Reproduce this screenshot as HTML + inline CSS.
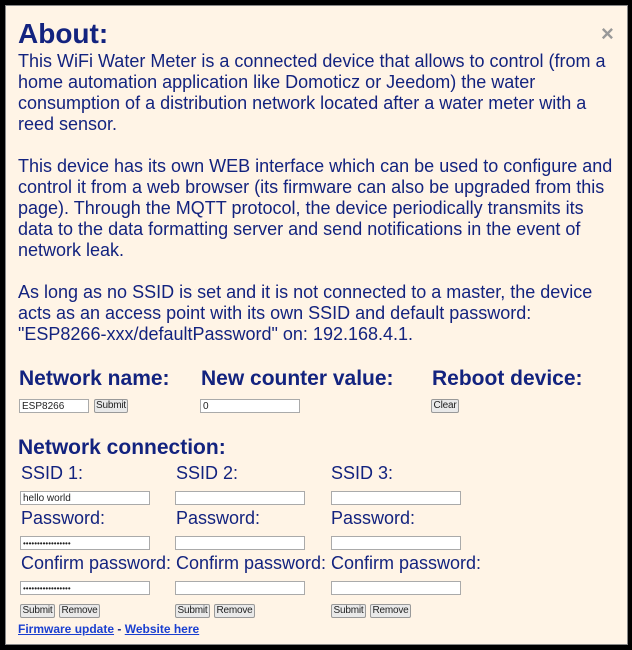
<!DOCTYPE html>
<html><head><meta charset="utf-8"><style>
*{margin:0;padding:0;box-sizing:border-box}
body{width:632px;height:650px;background:#000;position:relative;overflow:hidden;font-family:"Liberation Sans",sans-serif;color:#13237f}
#p{position:absolute;left:5px;top:5px;width:623px;height:640px;background:#fff4e6;border:1px solid #888}
.a{position:absolute;white-space:nowrap}
h1{position:absolute;left:12px;top:12px;font-size:28px;font-weight:bold;line-height:32px}
.x{position:absolute;left:595px;top:15px;font-size:22px;color:#999;font-weight:bold}
.t{position:absolute;left:12px;top:45px;width:600px;font-size:18px;line-height:21px}
.h{font-size:21px;font-weight:bold;line-height:24px}
.l{font-size:18px;line-height:21px}
.in{position:absolute;height:14px;background:#fff;border:1px solid #aaa;font-size:10px;line-height:13px;padding-left:2px;color:#222;font-family:"Liberation Sans",sans-serif;overflow:hidden}
.b{position:absolute;height:14px;background:#e9e9e9;border:1px solid #999;border-radius:2px;font-size:10px;line-height:12px;padding:0;color:#222;text-align:center;letter-spacing:-0.2px;white-space:nowrap}
.lk{position:absolute;font-size:12px;font-weight:bold;color:#1a3fd0;line-height:14px}
.lk u{color:#1a3fd0}
</style></head><body>
<div id="p">
<h1>About:</h1>
<div class="x">×</div>
<div class="t">This WiFi Water Meter is a connected device that allows to control (from a home automation application like Domoticz or Jeedom) the water consumption of a distribution network located after a water meter with a reed sensor.<br><br>This device has its own WEB interface which can be used to configure and control it from a web browser (its firmware can also be upgraded from this page). Through the MQTT protocol, the device periodically transmits its data to the data formatting server and send notifications in the event of network leak.<br><br>As long as no SSID is set and it is not connected to a master, the device acts as an access point with its own SSID and default password: "ESP8266-xxx/defaultPassword" on: 192.168.4.1.</div>
</div>
<div class="a h" style="left:19px;top:367px">Network name:</div>
<div class="a h" style="left:201px;top:367px">New counter value:</div>
<div class="a h" style="left:432px;top:367px">Reboot device:</div>
<div class="in" style="left:19px;top:399px;width:70px">ESP8266</div>
<div class="b" style="left:94px;top:399px;width:34px">Submit</div>
<div class="in" style="left:200px;top:399px;width:100px">0</div>
<div class="b" style="left:431px;top:399px;width:28px">Clear</div>
<div class="a h" style="left:18px;top:436px">Network connection:</div>

<div class="a l" style="left:21px;top:463px">SSID 1:</div>
<div class="a l" style="left:176px;top:463px">SSID 2:</div>
<div class="a l" style="left:331px;top:463px">SSID 3:</div>
<div class="in" style="left:20px;top:491px;width:130px">hello world</div>
<div class="in" style="left:175px;top:491px;width:130px"></div>
<div class="in" style="left:331px;top:491px;width:130px"></div>
<div class="a l" style="left:21px;top:508px">Password:</div>
<div class="a l" style="left:176px;top:508px">Password:</div>
<div class="a l" style="left:331px;top:508px">Password:</div>
<div class="in" style="left:20px;top:536px;width:130px;font-size:8px">•••••••••••••••••</div>
<div class="in" style="left:175px;top:536px;width:130px"></div>
<div class="in" style="left:331px;top:536px;width:130px"></div>
<div class="a l" style="left:21px;top:553px">Confirm password:</div>
<div class="a l" style="left:176px;top:553px">Confirm password:</div>
<div class="a l" style="left:331px;top:553px">Confirm password:</div>
<div class="in" style="left:20px;top:581px;width:130px;font-size:8px">•••••••••••••••••</div>
<div class="in" style="left:175px;top:581px;width:130px"></div>
<div class="in" style="left:331px;top:581px;width:130px"></div>
<div class="b" style="left:20px;top:604px;width:35px">Submit</div>
<div class="b" style="left:59px;top:604px;width:41px">Remove</div>
<div class="b" style="left:175px;top:604px;width:35px">Submit</div>
<div class="b" style="left:214px;top:604px;width:41px">Remove</div>
<div class="b" style="left:331px;top:604px;width:35px">Submit</div>
<div class="b" style="left:370px;top:604px;width:41px">Remove</div>
<div class="lk" style="left:18px;top:622px"><u>Firmware update</u> <span style="color:#13237f">-</span> <u>Website here</u></div>
</body></html>
